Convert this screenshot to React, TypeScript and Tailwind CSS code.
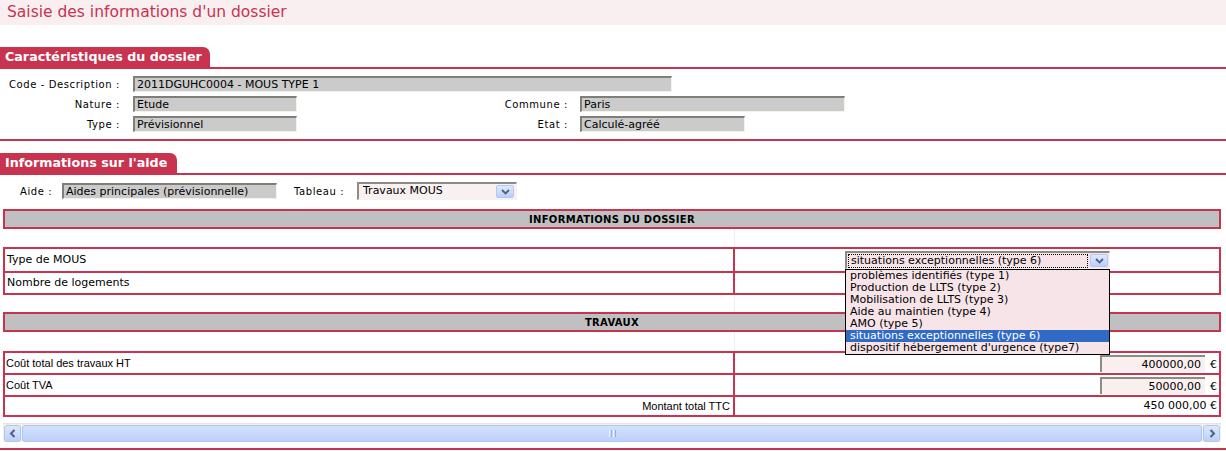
import React from "react";

function Field({ className, children }: { className: string; children?: React.ReactNode }) {
  return (
    <div
      className={
        "h-[16px] shrink-0 bg-[#cbcbcb] border-t-2 border-l-2 border-r border-b border-t-[#807f77] border-l-[#807f77] border-r-[#f3f3ec] border-b-[#f3f3ec] pl-[2px] text-[11px] leading-[13px] tracking-normal whitespace-nowrap overflow-hidden " +
        className
      }
    >
      {children}
    </div>
  );
}

function ArrowBtn() {
  return (
    <div className="w-[18px] h-[13px] shrink-0 rounded-[2px] border border-[#b3c7f2] bg-gradient-to-b from-[#dfe9fe] to-[#bacef8] flex items-center justify-center">
      <svg width="9" height="6" viewBox="0 0 9 6">
        <path d="M1 1 L4.5 4.5 L8 1" fill="none" stroke="#4d6185" strokeWidth="1.8" />
      </svg>
    </div>
  );
}

function ScrollBtn({ dir }: { dir: "l" | "r" }) {
  return (
    <div className="w-[17px] h-[17px] shrink-0 rounded-[3px] border border-[#b3c6ef] bg-gradient-to-b from-[#dce7fd] to-[#bcd0f9] flex items-center justify-center">
      <svg width="8" height="9" viewBox="0 0 8 9">
        {dir === "l" ? (
          <path d="M5.5 1 L2 4.5 L5.5 8" fill="none" stroke="#4d6185" strokeWidth="2" />
        ) : (
          <path d="M2.5 1 L6 4.5 L2.5 8" fill="none" stroke="#4d6185" strokeWidth="2" />
        )}
      </svg>
    </div>
  );
}

const items = [
  "problèmes identifiés (type 1)",
  "Production de LLTS (type 2)",
  "Mobilisation de LLTS (type 3)",
  "Aide au maintien (type 4)",
  "AMO (type 5)",
  "situations exceptionnelles (type 6)",
  "dispositif hébergement d'urgence (type7)",
];

export default function App() {
  return (
    <div className="w-[1226px] h-[451px] overflow-hidden bg-white text-black font-['DejaVu_Sans',Verdana,sans-serif]">
      {/* Page title */}
      <div className="h-[25px] bg-[#f9eff1] pl-[7px] flex items-center text-[15.5px] leading-none text-[#c8334f] whitespace-nowrap">
        Saisie des informations d'un dossier
      </div>

      {/* Section 1 */}
      <div className="mt-[22px] w-[210px] h-[20px] bg-[#c8334f] rounded-tr-[7px] pl-[5px] text-[12.7px] font-bold leading-[20px] text-white whitespace-nowrap">
        Caractéristiques du dossier
      </div>
      <div className="h-[2px] bg-[#c8334f]" />

      <div className="pt-[7px] pb-[7px] flex flex-col gap-[4px] text-[10px] tracking-[0.6px] whitespace-nowrap">
        <div className="flex items-center h-[16px]">
          <div className="w-[120px] text-right">Code - Description :</div>
          <Field className="ml-[13px] w-[539px]">2011DGUHC0004 - MOUS TYPE 1</Field>
        </div>
        <div className="flex items-center h-[16px]">
          <div className="w-[120px] text-right">Nature :</div>
          <Field className="ml-[13px] w-[164px]">Etude</Field>
          <div className="w-[271px] text-right">Commune :</div>
          <Field className="ml-[12px] w-[265px]">Paris</Field>
        </div>
        <div className="flex items-center h-[16px]">
          <div className="w-[120px] text-right">Type :</div>
          <Field className="ml-[13px] w-[164px]">Prévisionnel</Field>
          <div className="w-[271px] text-right">Etat :</div>
          <Field className="ml-[12px] w-[165px]">Calculé-agréé</Field>
        </div>
      </div>
      <div className="h-[2px] bg-[#c8334f]" />

      {/* Section 2 */}
      <div className="mt-[12px] w-[177px] h-[20px] bg-[#c8334f] rounded-tr-[7px] pl-[5px] text-[12.7px] font-bold leading-[20px] text-white whitespace-nowrap">
        Informations sur l'aide
      </div>
      <div className="h-[2px] bg-[#c8334f]" />

      <div className="pt-[7px] pl-[20px] flex items-center h-[25px] text-[10px] tracking-[0.6px] whitespace-nowrap">
        <div className="w-[42px]">Aide :</div>
        <Field className="w-[215px]">Aides principales (prévisionnelle)</Field>
        <div className="ml-[17px] w-[63px]">Tableau :</div>
        <div className="w-[160px] h-[18px] bg-[#f9f1f1] border-t-2 border-l-2 border-t-[#8c8b84] border-l-[#8c8b84] border-r border-b border-r-[#f4f4ef] border-b-[#f4f4ef] flex items-center pl-[4px] pr-[2px] text-[11px] tracking-normal">
          <span className="flex-1">Travaux MOUS</span>
          <ArrowBtn />
        </div>
      </div>

      {/* Table */}
      <div className="mt-[9px] ml-[3px] w-[1218px] whitespace-nowrap">
        <div className="h-[20px] border-2 border-[#c8334f] bg-[#c0c0c0] flex items-center justify-center text-[10px] font-bold tracking-[0.3px]">
          INFORMATIONS DU DOSSIER
        </div>
        <div className="h-[18px] flex">
          <div className="w-[731px]" />
          <div className="w-[1px] bg-[#efefef]" />
        </div>
        <div className="border-2 border-[#c8334f] text-[11px]">
          <div className="flex h-[22px]">
            <div className="w-[728px] pl-[2px] flex items-center">Type de MOUS</div>
            <div className="flex-1 border-l-2 border-[#c8334f] flex items-center pl-[110px]">
              <div className="relative w-[265px] h-[18px]">
                <div className="h-full bg-[#f7e4e8] border-t-2 border-l-2 border-t-[#8c8b84] border-l-[#8c8b84] border-r border-b border-r-[#f4f4ef] border-b-[#f4f4ef] flex items-center pl-[1px] pr-[1px]">
                  <div className="flex-1 h-[14px] border border-dotted border-black pl-[2px] leading-[12px]">
                    situations exceptionnelles (type 6)
                  </div>
                  <div className="ml-[2px]">
                    <ArrowBtn />
                  </div>
                </div>
                <div className="absolute left-0 top-full z-10 w-[265px] border border-black bg-[#f7e4e8] leading-[12px]">
                  {items.map((it, i) => (
                    <div
                      key={it}
                      className={
                        i === 5
                          ? "h-[12px] pl-[4px] bg-[#316ac5] text-white"
                          : "h-[12px] pl-[4px]"
                      }
                    >
                      {it}
                    </div>
                  ))}
                </div>
              </div>
            </div>
          </div>
          <div className="flex h-[22px] border-t-2 border-[#c8334f]">
            <div className="w-[728px] pl-[2px] flex items-center">Nombre de logements</div>
            <div className="flex-1 border-l-2 border-[#c8334f]" />
          </div>
        </div>
        <div className="h-[17px] flex">
          <div className="w-[731px]" />
          <div className="w-[1px] bg-[#efefef]" />
        </div>
        <div className="h-[20px] border-2 border-[#c8334f] bg-[#c0c0c0] flex items-center justify-center text-[10px] font-bold tracking-[0.3px]">
          TRAVAUX
        </div>
        <div className="h-[19px] flex">
          <div className="w-[731px]" />
          <div className="w-[1px] bg-[#efefef]" />
        </div>
        <div className="border-2 border-[#c8334f] text-[11px]">
          <div className="flex h-[20px]">
            <div className="w-[728px] pl-[1px] flex items-center font-['Liberation_Sans',Arial,sans-serif]">
              Coût total des travaux HT
            </div>
            <div className="flex-1 border-l-2 border-[#c8334f] flex items-center justify-end pr-[2px] leading-[15px]">
              <div className="w-[105px] h-[17px] bg-[#f9efef] border-t-2 border-l-2 border-t-[#8c8b84] border-l-[#8c8b84] text-right pr-[4px]">
                400000,00
              </div>
              <span className="ml-[5px] mt-[2px]">€</span>
            </div>
          </div>
          <div className="flex h-[22px] border-t-2 border-[#c8334f]">
            <div className="w-[728px] pl-[1px] flex items-center font-['Liberation_Sans',Arial,sans-serif]">Coût TVA</div>
            <div className="flex-1 border-l-2 border-[#c8334f] flex items-center justify-end pr-[2px] leading-[15px]">
              <div className="w-[105px] h-[17px] bg-[#f9efef] border-t-2 border-l-2 border-t-[#8c8b84] border-l-[#8c8b84] text-right pr-[4px]">
                50000,00
              </div>
              <span className="ml-[5px] mt-[2px]">€</span>
            </div>
          </div>
          <div className="flex h-[20px] border-t-2 border-[#c8334f]">
            <div className="w-[728px] pr-[3px] flex items-center justify-end font-['Liberation_Sans',Arial,sans-serif]">
              Montant total TTC
            </div>
            <div className="flex-1 border-l-2 border-[#c8334f] flex items-center justify-end pr-[2px]">
              450 000,00 €
            </div>
          </div>
        </div>

        {/* Horizontal scrollbar */}
        <div className="mt-[6px] h-[19px] bg-[#f1f0ea] border-t border-[#e5e4dc] flex items-center gap-[1px] px-[1px]">
          <ScrollBtn dir="l" />
          <div className="flex-1 h-[17px] rounded-[3px] border border-[#b3c6ef] bg-gradient-to-b from-[#d3e1fd] to-[#bdd0f9] flex items-center justify-center">
            <div className="flex gap-[1px]">
              <div className="w-[1px] h-[7px] bg-[#eef4ff]" />
              <div className="w-[1px] h-[7px] bg-[#8eaef0]" />
              <div className="w-[1px] h-[7px] bg-[#eef4ff]" />
              <div className="w-[1px] h-[7px] bg-[#8eaef0]" />
            </div>
          </div>
          <ScrollBtn dir="r" />
        </div>
      </div>
      <div className="mt-[6px] h-[2px] bg-[#c8334f]" />
    </div>
  );
}
